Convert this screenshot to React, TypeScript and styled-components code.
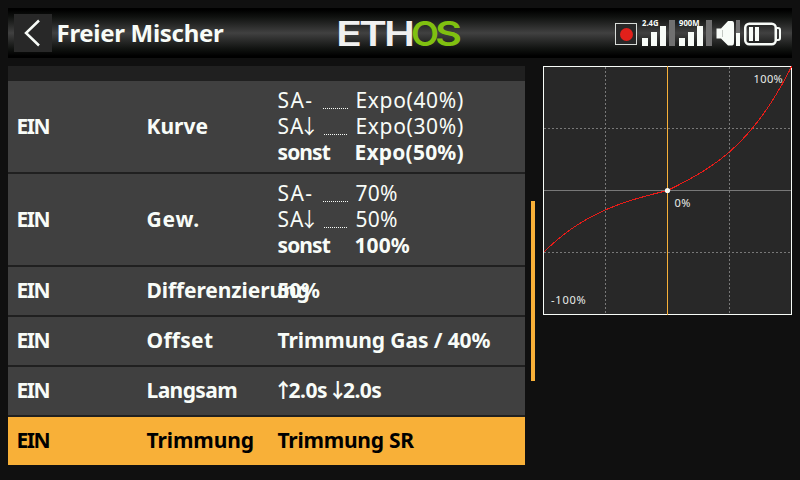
import React from 'react';
import styled, { createGlobalStyle } from 'styled-components';

const GlobalStyle = createGlobalStyle`
  * { box-sizing: border-box; }
  body { margin: 0; background: #101010; }
`;

const Screen = styled.div`
  width: 800px;
  height: 480px;
  padding: 8px 8px 0;
  display: flex;
  flex-direction: column;
  gap: 8px;
  overflow: hidden;
  background: #101010;
  color: #f8fcf8;
  font-family: "Noto Sans", sans-serif;
`;

const Header = styled.header`
  flex: none;
  height: 50px;
  padding: 0 11px 0 6px;
  display: grid;
  grid-template-columns: 38px 285px 1fr auto;
  align-items: center;
  background: linear-gradient(#000 0%, #000 4%, #101210 18%, #252625 32%, #414141 50%, #252625 68%, #101210 82%, #000 96%, #000 100%);
`;

const BackButton = styled.button`
  width: 38px;
  height: 38px;
  padding: 0;
  border: 0;
  display: flex;
  background: #282828;
`;

const Title = styled.h1`
  margin: 0;
  padding-left: 4.5px;
  font-size: 24px;
  line-height: 34px;
  font-weight: 700;
  letter-spacing: -0.3px;
  white-space: nowrap;
`;

const Logo = styled.svg`
  display: block;
  overflow: visible;
  font-family: Inter, sans-serif;
  font-weight: 600;
  font-size: 34.4px;
`;

const Status = styled.div`
  display: flex;
  height: 28px;
`;

const StatusIcon = styled.svg<{ $gap?: number }>`
  display: block;
  overflow: visible;
  margin-left: ${(p) => p.$gap ?? 0}px;
  font: 700 8px "Noto Sans", sans-serif;
`;

const Body = styled.main`
  display: flex;
  align-items: flex-start;
`;

const List = styled.section`
  width: 517px;
  padding-top: 15px;
  display: flex;
  flex-direction: column;
  gap: 2px;
  background: #202020;
`;

const Row = styled.div<{ $tall?: boolean; $selected?: boolean }>`
  height: ${(p) => (p.$tall ? 91 : 48)}px;
  padding: 0 0 2px 8.5px;
  display: grid;
  grid-template-columns: 130px 131px 1fr;
  align-items: center;
  font-size: 21px;
  line-height: 26px;
  font-weight: 700;
  white-space: nowrap;
  background: ${(p) => (p.$selected ? '#f8b038' : '#404040')};
  color: ${(p) => (p.$selected ? '#000' : '#f8fcf8')};
`;

const Label = styled.span<{ $spacing?: number }>`
  letter-spacing: ${(p) => p.$spacing ?? 0}px;
`;

const Conditions = styled.div`
  display: flex;
  flex-direction: column;
`;

const Condition = styled.div<{ $default?: boolean }>`
  height: 26px;
  display: grid;
  grid-template-columns: ${(p) => (p.$default ? 77 : 78)}px 1fr;
  font-weight: ${(p) => (p.$default ? 700 : 400)};
`;

const Source = styled.span`
  display: flex;
  align-items: flex-start;
`;

const Leader = styled.i<{ $dots: number }>`
  width: ${(p) => p.$dots * 2 - 1}px;
  height: 1px;
  margin: 21px ${(p) => 20.5 - p.$dots}px 0 auto;
  background: repeating-linear-gradient(90deg, #f8fcf8 0 1px, transparent 1px 2px);
`;

const Arrow = styled.span<{ $bold?: boolean }>`
  width: 11px;
  display: inline-flex;
  justify-content: center;
  vertical-align: top;
  font-family: "Noto Sans CJK SC", sans-serif;
  font-size: 20px;
  font-weight: ${(p) => (p.$bold ? 700 : 400)};
  line-height: 25px;
`;

const ScrollTrack = styled.div`
  width: 18px;
  padding: 135px 8px 0 6px;
`;

const ScrollThumb = styled.div`
  height: 180px;
  background: #f8b038;
`;

const Chart = styled.svg`
  display: block;
  font: 11px "Noto Sans", sans-serif;
`;

const expo = (x: number) => x * (0.5 * x * x + 0.5) * (x < 0 ? 0.5 : 1);

const curve = Array.from({ length: 125 }, (_, i) => {
  const x = -1 + i / 62;
  return `${(124.5 + x * 124).toFixed(1)},${(124.5 - expo(x) * 124).toFixed(1)}`;
}).join(' ');

function Signal({ label, width, gap }: { label: string; width: number; gap: number }) {
  return (
    <StatusIcon $gap={gap} width="33" height="28" fill="#f8fcf8">
      <rect x="0" y="19" width="6" height="8" />
      <rect x="9" y="13" width="6" height="14" />
      <rect x="18" y="7" width="6" height="20" />
      <rect x="27" y="1" width="6" height="26" fill="#707070" />
      <text x="0" y="7" textLength={width} lengthAdjust="spacingAndGlyphs">{label}</text>
    </StatusIcon>
  );
}

type Line = { source: React.ReactNode; dots?: number; spacing?: number; value: string; valueSpacing?: number };

function ConditionList({ lines }: { lines: Line[] }) {
  return (
    <Conditions>
      {lines.map((line, i) => (
        <Condition key={i} $default={!line.dots}>
          <Source>
            <Label $spacing={line.spacing}>{line.source}</Label>
            {line.dots && <Leader $dots={line.dots} />}
          </Source>
          <Label $spacing={line.valueSpacing}>{line.value}</Label>
        </Condition>
      ))}
    </Conditions>
  );
}

const down = <>SA<Arrow>↓</Arrow></>;

const rows: { name: string; spacing: number; tall?: boolean; selected?: boolean; value: React.ReactNode }[] = [
  {
    name: 'Kurve', spacing: 0, tall: true,
    value: <ConditionList lines={[
      { source: 'SA-', dots: 13, spacing: 1.4, value: 'Expo(40%)', valueSpacing: 0.65 },
      { source: down, dots: 12, spacing: 0.9, value: 'Expo(30%)', valueSpacing: 0.65 },
      { source: 'sonst', spacing: -0.9, value: 'Expo(50%)', valueSpacing: 0.2 },
    ]} />,
  },
  {
    name: 'Gew.', spacing: 0.8, tall: true,
    value: <ConditionList lines={[
      { source: 'SA-', dots: 13, spacing: 1.4, value: '70%', valueSpacing: 0.2 },
      { source: down, dots: 12, spacing: 0.9, value: '50%', valueSpacing: 0.2 },
      { source: 'sonst', spacing: -0.9, value: '100%', valueSpacing: 0.1 },
    ]} />,
  },
  { name: 'Differenzierung', spacing: -0.1, value: <Label $spacing={-0.3}>50%</Label> },
  { name: 'Offset', spacing: 0.3, value: <Label $spacing={-0.1}>Trimmung Gas / 40%</Label> },
  { name: 'Langsam', spacing: -0.6, value: <Label $spacing={-0.5}><Arrow $bold>↑</Arrow>2.0s <Arrow $bold>↓</Arrow>2.0s</Label> },
  { name: 'Trimmung', spacing: -0.1, selected: true, value: <Label $spacing={-0.25}>Trimmung SR</Label> },
];

export default function App() {
  return (
    <>
      <GlobalStyle />
      <Screen>
        <Header>
          <BackButton aria-label="Zurück">
            <svg width="38" height="38" fill="none" stroke="#f8fcf8" strokeWidth="2.5">
              <path d="M25 6.5 L12 19 L25 31.5" />
            </svg>
          </BackButton>
          <Title>Freier Mischer</Title>
          <Logo width="126" height="30" fill="#f0f0f0">
            <text x="-1" y="27.5" textLength="26" lengthAdjust="spacingAndGlyphs">E</text>
            <text x="22" y="27.5" textLength="28" lengthAdjust="spacingAndGlyphs">T</text>
            <text x="47" y="27.5" textLength="31" lengthAdjust="spacingAndGlyphs">H</text>
            <text x="74" y="27.5" textLength="28" lengthAdjust="spacingAndGlyphs" fill="#80c010">O</text>
            <text x="98" y="27.5" textLength="27" lengthAdjust="spacingAndGlyphs" fill="#80c010">S</text>
          </Logo>
          <Status>
            <StatusIcon width="22" height="28">
              <rect x="0.5" y="4.5" width="21" height="21" fill="#282828" stroke="#d8dcd8" />
              <circle cx="11.5" cy="15.5" r="6.5" fill="#e2201b" />
            </StatusIcon>
            <Signal label="2.4G" width={16.5} gap={5} />
            <Signal label="900M" width={20.5} gap={4} />
            <StatusIcon $gap={4} width="25" height="28" fill="#f8fcf8">
              <path d="M0.5 9.5 H5 L12 2 H16 Q18 2 18 5 V23 Q18 26.5 16 26.5 H12 L5 19.5 H0.5 Z" />
              <path d="M6.5 11 V18" stroke="#a0a4a0" strokeWidth="0.6" />
              <rect x="20" y="1" width="4" height="13" fill="#707070" />
              <rect x="20" y="14" width="4" height="13" />
            </StatusIcon>
            <StatusIcon $gap={3} width="37" height="28" fill="#f8fcf8">
              <rect x="1.25" y="4.75" width="30.5" height="20.5" rx="4" fill="none" stroke="#f8fcf8" strokeWidth="2.5" />
              <path d="M32 9 H34 Q36 9 36 11 V19 Q36 21 34 21 H32" fill="none" stroke="#f8fcf8" strokeWidth="2" />
              <rect x="5" y="8" width="4" height="14" />
              <rect x="11" y="8" width="4" height="14" />
            </StatusIcon>
          </Status>
        </Header>
        <Body>
          <List>
            {rows.map((row) => (
              <Row key={row.name} $tall={row.tall} $selected={row.selected}>
                <Label $spacing={-1.5}>EIN</Label>
                <Label $spacing={row.spacing}>{row.name}</Label>
                {row.value}
              </Row>
            ))}
          </List>
          <ScrollTrack>
            <ScrollThumb />
          </ScrollTrack>
          <Chart width="249" height="249" fill="none">
            <rect x="0.5" y="0.5" width="248" height="248" fill="#282828" stroke="#f8fcf8" />
            <g stroke="#787878" strokeDasharray="2 2">
              <path d="M62.5 1 V248 M186.5 1 V248 M1 62.5 H248 M1 186.5 H248" />
            </g>
            <path d="M1 124.5 H248" stroke="#787878" />
            <path d="M124.5 0 V249" stroke="#f8b038" />
            <polyline points={curve} stroke="#e81c18" shapeRendering="crispEdges" />
            <circle cx="124.5" cy="124.5" r="2.6" fill="#f8fcf8" />
            <g fill="#e8ece8">
              <text x="210.5" y="17" letterSpacing="0.4">100%</text>
              <text x="131.5" y="141" letterSpacing="0.4">0%</text>
              <text x="8" y="238" letterSpacing="0.8">-100%</text>
            </g>
          </Chart>
        </Body>
      </Screen>
    </>
  );
}
